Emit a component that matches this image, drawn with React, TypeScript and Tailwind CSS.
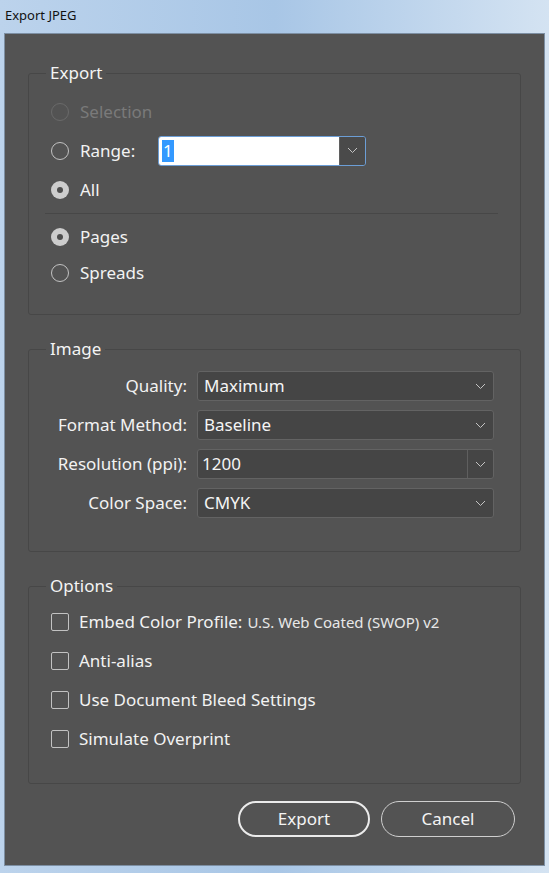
import React from 'react';

const font = { fontFamily: '"Noto Sans", "Open Sans", sans-serif' };

function Chevron() {
  return (
    <svg width="11" height="7" viewBox="0 0 11 7" className="block">
      <polyline points="1,1 5.5,5.5 10,1" fill="none" stroke="#c4c4c4" strokeWidth="1" />
    </svg>
  );
}

function Radio({ checked, disabled, label }: { checked?: boolean; disabled?: boolean; label: string }) {
  return (
    <div className="flex items-center gap-[11px]">
      {checked ? (
        <span className="flex h-[18px] w-[18px] items-center justify-center rounded-full bg-[#cdcdcd]">
          <span className="h-[6px] w-[6px] rounded-full bg-[#4e4e4e]" />
        </span>
      ) : (
        <span
          className={
            disabled
              ? 'h-[18px] w-[18px] rounded-full border border-[#6a6a6a]'
              : 'h-[18px] w-[18px] rounded-full border border-[#c2c2c2]'
          }
        />
      )}
      <span className={disabled ? 'text-[17px] text-[#7a7a7a]' : 'text-[17px] text-[#f2f2f2]'}>{label}</span>
    </div>
  );
}

function Check({ children }: { children: React.ReactNode }) {
  return (
    <div className="flex h-[39px] items-center gap-[10px]">
      <span className="h-[18px] w-[18px] rounded-[2px] border border-[#c2c2c2]" />
      <span className="flex items-baseline text-[17px] text-[#f2f2f2]">{children}</span>
    </div>
  );
}

function SelectRow({ label, value, split }: { label: string; value: string; split?: boolean }) {
  return (
    <div className="flex items-center gap-[10px]">
      <span className="w-[158px] text-right text-[17px] text-[#f2f2f2]">{label}</span>
      <div className="flex h-[30px] flex-1 items-center rounded-[3px] border border-[#636363] bg-[#454545]">
        <span className={split ? 'flex-1 pl-[4px] text-[17px] text-[#f4f4f4]' : 'flex-1 pl-[6px] text-[17px] text-[#f4f4f4]'}>
          {value}
        </span>
        {split ? (
          <span className="flex h-full w-[26px] items-center justify-center border-l border-[#5f5f5f]">
            <Chevron />
          </span>
        ) : (
          <span className="flex w-[26px] items-center justify-center">
            <Chevron />
          </span>
        )}
      </div>
    </div>
  );
}

export default function App() {
  return (
    <div
      className="flex h-[873px] w-[549px] flex-col bg-gradient-to-r from-[#bcd3ec] via-[#a8c6e6] to-[#d4e3f2] px-[4px] pb-[7px]"
      style={font}
    >
      {/* Title bar */}
      <div className="flex h-[33px] items-center pl-[1px] pb-[1px] text-[13px] text-[#111]">Export JPEG</div>

      {/* Dialog body */}
      <div className="flex flex-1 flex-col border border-[#7d8fa3] bg-[#535353] px-[23px] pb-[27px]">
        {/* Export */}
        <fieldset className="mt-[28px] rounded-[3px] border border-[#474747] pb-[23px]">
          <legend className="ml-[17px] px-[4px] text-[17px] leading-[22px] text-[#f4f4f4]">Export</legend>
          <div className="px-[22px] pt-[8px]">
            <div className="flex h-[39px] items-center">
              <Radio disabled label="Selection" />
            </div>
            <div className="flex h-[39px] items-center">
              <div className="w-[107px] shrink-0">
                <Radio label="Range:" />
              </div>
              <div className="flex h-[30px] w-[208px] overflow-hidden rounded-[3px] border border-[#6c9ed6]">
                <div className="flex flex-1 items-center bg-white pl-[3px]">
                  <span className="bg-[#3399ff] px-[1px] text-[17px] leading-[22px] text-white">1</span>
                </div>
                <span className="flex w-[26px] items-center justify-center border-l border-[#5f5f5f] bg-[#4a4a4a]">
                  <Chevron />
                </span>
              </div>
            </div>
            <div className="flex h-[39px] items-center">
              <Radio checked label="All" />
            </div>
            <div className="-ml-[6px] mt-[4px] h-px bg-[#474747]" />
            <div className="mt-[5px] flex h-[36px] items-center">
              <Radio checked label="Pages" />
            </div>
            <div className="flex h-[36px] items-center">
              <Radio label="Spreads" />
            </div>
          </div>
        </fieldset>

        {/* Image */}
        <fieldset className="mt-[23px] rounded-[3px] border border-[#474747] pb-[33px]">
          <legend className="ml-[17px] px-[4px] text-[17px] leading-[22px] text-[#f4f4f4]">Image</legend>
          <div className="flex flex-col gap-[9px] pr-[26px] pt-[11px]">
            <SelectRow label="Quality:" value="Maximum" />
            <SelectRow label="Format Method:" value="Baseline" />
            <SelectRow label="Resolution (ppi):" value="1200" split />
            <SelectRow label="Color Space:" value="CMYK" />
          </div>
        </fieldset>

        {/* Options */}
        <fieldset className="mt-[23px] rounded-[3px] border border-[#474747] pb-[25px]">
          <legend className="ml-[17px] px-[4px] text-[17px] leading-[22px] text-[#f4f4f4]">Options</legend>
          <div className="px-[22px] pt-[5px]">
            <Check>
              Embed Color Profile:
              <span className="ml-[5px] text-[15px] text-[#e8e8e8]">U.S. Web Coated (SWOP) v2</span>
            </Check>
            <Check>Anti-alias</Check>
            <Check>Use Document Bleed Settings</Check>
            <Check>Simulate Overprint</Check>
          </div>
        </fieldset>

        {/* Buttons */}
        <div className="mt-[17px] flex justify-end gap-[11px] pr-[6px]">
          <button className="h-[36px] w-[132px] rounded-full border-2 border-[#ebebeb] text-[17px] text-[#f4f4f4]">
            Export
          </button>
          <button className="h-[36px] w-[134px] rounded-full border border-[#cfcfcf] text-[17px] text-[#f4f4f4]">
            Cancel
          </button>
        </div>
      </div>
    </div>
  );
}
